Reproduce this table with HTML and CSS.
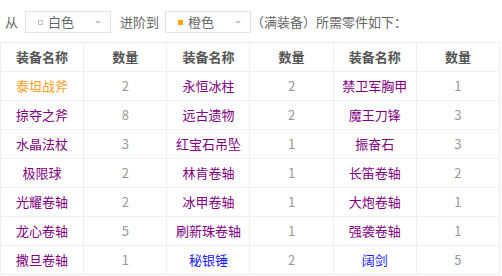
FILE: index.html
```html
<!DOCTYPE html>
<html lang="zh-CN">
<head>
<meta charset="utf-8">
<link rel="stylesheet" href="styles.css">
</head>
<body>
<div class="bar">
  <span class="label">从</span>
  <div class="select">
    <span class="sq sq-white"></span>
    <span class="sel-text">白色</span>
    <span class="caret"></span>
  </div>
  <span class="label">进阶到</span>
  <div class="select">
    <span class="sq sq-orange"></span>
    <span class="sel-text">橙色</span>
    <span class="caret"></span>
  </div>
  <span class="label note">（满装备）所需零件如下：</span>
</div>
<table class="parts">
  <thead>
    <tr><th>装备名称</th><th>数量</th><th>装备名称</th><th>数量</th><th>装备名称</th><th>数量</th></tr>
  </thead>
  <tbody>
    <tr><td class="orange">泰坦战斧</td><td class="num">2</td><td class="purple">永恒冰柱</td><td class="num">2</td><td class="purple">禁卫军胸甲</td><td class="num">1</td></tr>
    <tr><td class="purple">掠夺之斧</td><td class="num">8</td><td class="purple">远古遗物</td><td class="num">2</td><td class="purple">魔王刀锋</td><td class="num">3</td></tr>
    <tr><td class="purple">水晶法杖</td><td class="num">3</td><td class="purple">红宝石吊坠</td><td class="num">1</td><td class="purple">振奋石</td><td class="num">3</td></tr>
    <tr><td class="purple">极限球</td><td class="num">2</td><td class="purple">林肯卷轴</td><td class="num">1</td><td class="purple">长笛卷轴</td><td class="num">2</td></tr>
    <tr><td class="purple">光耀卷轴</td><td class="num">2</td><td class="purple">冰甲卷轴</td><td class="num">1</td><td class="purple">大炮卷轴</td><td class="num">1</td></tr>
    <tr><td class="purple">龙心卷轴</td><td class="num">5</td><td class="purple">刷新珠卷轴</td><td class="num">1</td><td class="purple">强袭卷轴</td><td class="num">1</td></tr>
    <tr><td class="purple">撒旦卷轴</td><td class="num">1</td><td class="blue">秘银锤</td><td class="num">2</td><td class="blue">阔剑</td><td class="num">5</td></tr>
  </tbody>
</table>
</body>
</html>
```
FILE: styles.css
```css
html, body {
  margin: 0;
  padding: 0;
  background: #fff;
}
body {
  font-family: "Noto Sans CJK SC", "Noto Sans", sans-serif;
  font-size: 13px;
  color: #666;
}
.bar {
  height: 42px;
  display: flex;
  align-items: center;
  padding-left: 5px;
  box-sizing: border-box;
  padding-top: 1px;
}
.label {
  line-height: 22px;
  color: #666;
}
.label + .select {
  margin-left: 7px;
}
.select + .label {
  margin-left: 9px;
}
.select + .label.note {
  margin-left: 0;
}
.select {
  width: 86px;
  height: 22px;
  box-sizing: border-box;
  border: 1px solid #e3e3e3;
  background: #fff;
  display: flex;
  align-items: center;
  padding-left: 12px;
  position: relative;
}
.select + .label + .select {
  margin-left: 6px;
}
.sq {
  width: 5px;
  height: 5px;
  box-sizing: border-box;
  margin-right: 5px;
  margin-top: 1px;
}
.sq-white {
  border: 1px solid #c4c4c4;
  background: #fff;
}
.sq-orange {
  background: #ffa500;
}
.sel-text {
  color: #666;
  line-height: 20px;
}
.caret {
  position: absolute;
  right: 9px;
  top: 9px;
  width: 0;
  height: 0;
  border-left: 3px solid transparent;
  border-right: 3px solid transparent;
  border-top: 3px solid #c8c8c8;
}
.parts {
  width: 500px;
  border-collapse: collapse;
  table-layout: fixed;
}
.parts th, .parts td {
  border: 1px solid #efefef;
  height: 28px;
  padding: 0;
  text-align: center;
  font-size: 13px;
  line-height: 18px;
}
.parts th {
  color: #555;
  font-weight: bold;
}
.num { color: #999; }
.purple { color: #800080; }
.orange { color: #ff9d1a; }
.blue { color: #1a1aff; }
```
